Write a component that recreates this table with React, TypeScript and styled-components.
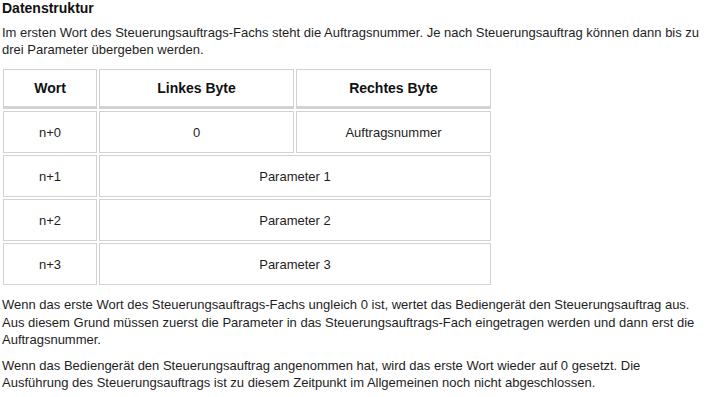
import React from 'react'
import styled, { createGlobalStyle } from 'styled-components'

const GlobalStyle = createGlobalStyle`
  html, body {
    margin: 0;
    padding: 0;
    background: #ffffff;
  }
  body {
    font-family: 'Liberation Sans', Arial, sans-serif;
    color: #1e1e1e;
  }
`

type Row = { word: string; left: string; right?: string }

const rows: Row[] = [
  { word: 'n+0', left: '0', right: 'Auftragsnummer' },
  { word: 'n+1', left: 'Parameter 1' },
  { word: 'n+2', left: 'Parameter 2' },
  { word: 'n+3', left: 'Parameter 3' },
]

const Page = styled.div`
  width: 707px;
  padding: 0 0 0 1px;
  box-sizing: border-box;
`

const Heading = styled.h3`
  margin: 0 0 0 1px;
  font-size: 14px;
  line-height: 16px;
  font-weight: 700;
  color: #111;
`

const Text = styled.p<{ $top?: number; $lh?: number }>`
  margin: ${p => p.$top ?? 0}px 0 0 1px;
  font-size: 13px;
  line-height: ${p => p.$lh ?? 17.5}px;
`

const Table = styled.table`
  margin-top: 9px;
  border-collapse: separate;
  border-spacing: 2px;
  table-layout: fixed;
  width: 492px;
  font-size: 13px;
`

const HeadCell = styled.th<{ $w: number }>`
  width: ${p => p.$w}px;
  height: 36px;
  padding: 0;
  border: 1px solid #d2d2d2;
  border-bottom: 3px solid #d2d2d2;
  font-size: 14px;
  font-weight: 700;
  color: #111;
  text-align: center;
  vertical-align: middle;
`

const Cell = styled.td`
  height: 40px;
  padding: 0;
  border: 1px solid #d2d2d2;
  font-size: 13px;
  text-align: center;
  vertical-align: middle;
`

export default function App() {
  return (
    <Page>
      <GlobalStyle />
      <Heading>Datenstruktur</Heading>
      <Text $top={8} $lh={17}>
        Im ersten Wort des Steuerungsauftrags-Fachs steht die Auftragsnummer. Je nach Steuerungsauftrag können dann bis zu
        drei Parameter übergeben werden.
      </Text>
      <Table>
        <thead>
          <tr>
            <HeadCell $w={92}>Wort</HeadCell>
            <HeadCell $w={193}>Linkes Byte</HeadCell>
            <HeadCell $w={193}>Rechtes Byte</HeadCell>
          </tr>
        </thead>
        <tbody>
          {rows.map(r => (
            <tr key={r.word}>
              <Cell>{r.word}</Cell>
              {r.right ? (
                <>
                  <Cell>{r.left}</Cell>
                  <Cell>{r.right}</Cell>
                </>
              ) : (
                <Cell colSpan={2}>{r.left}</Cell>
              )}
            </tr>
          ))}
        </tbody>
      </Table>
      <Text $top={9}>
        Wenn das erste Wort des Steuerungsauftrags-Fachs ungleich 0 ist, wertet das Bediengerät den Steuerungsauftrag aus.
        Aus diesem Grund müssen zuerst die Parameter in das Steuerungsauftrags-Fach eingetragen werden und dann erst die
        Auftragsnummer.
      </Text>
      <Text $top={8}>
        Wenn das Bediengerät den Steuerungsauftrag angenommen hat, wird das erste Wort wieder auf 0 gesetzt. Die
        <br />
        Ausführung des Steuerungsauftrags ist zu diesem Zeitpunkt im Allgemeinen noch nicht abgeschlossen.
      </Text>
    </Page>
  )
}
